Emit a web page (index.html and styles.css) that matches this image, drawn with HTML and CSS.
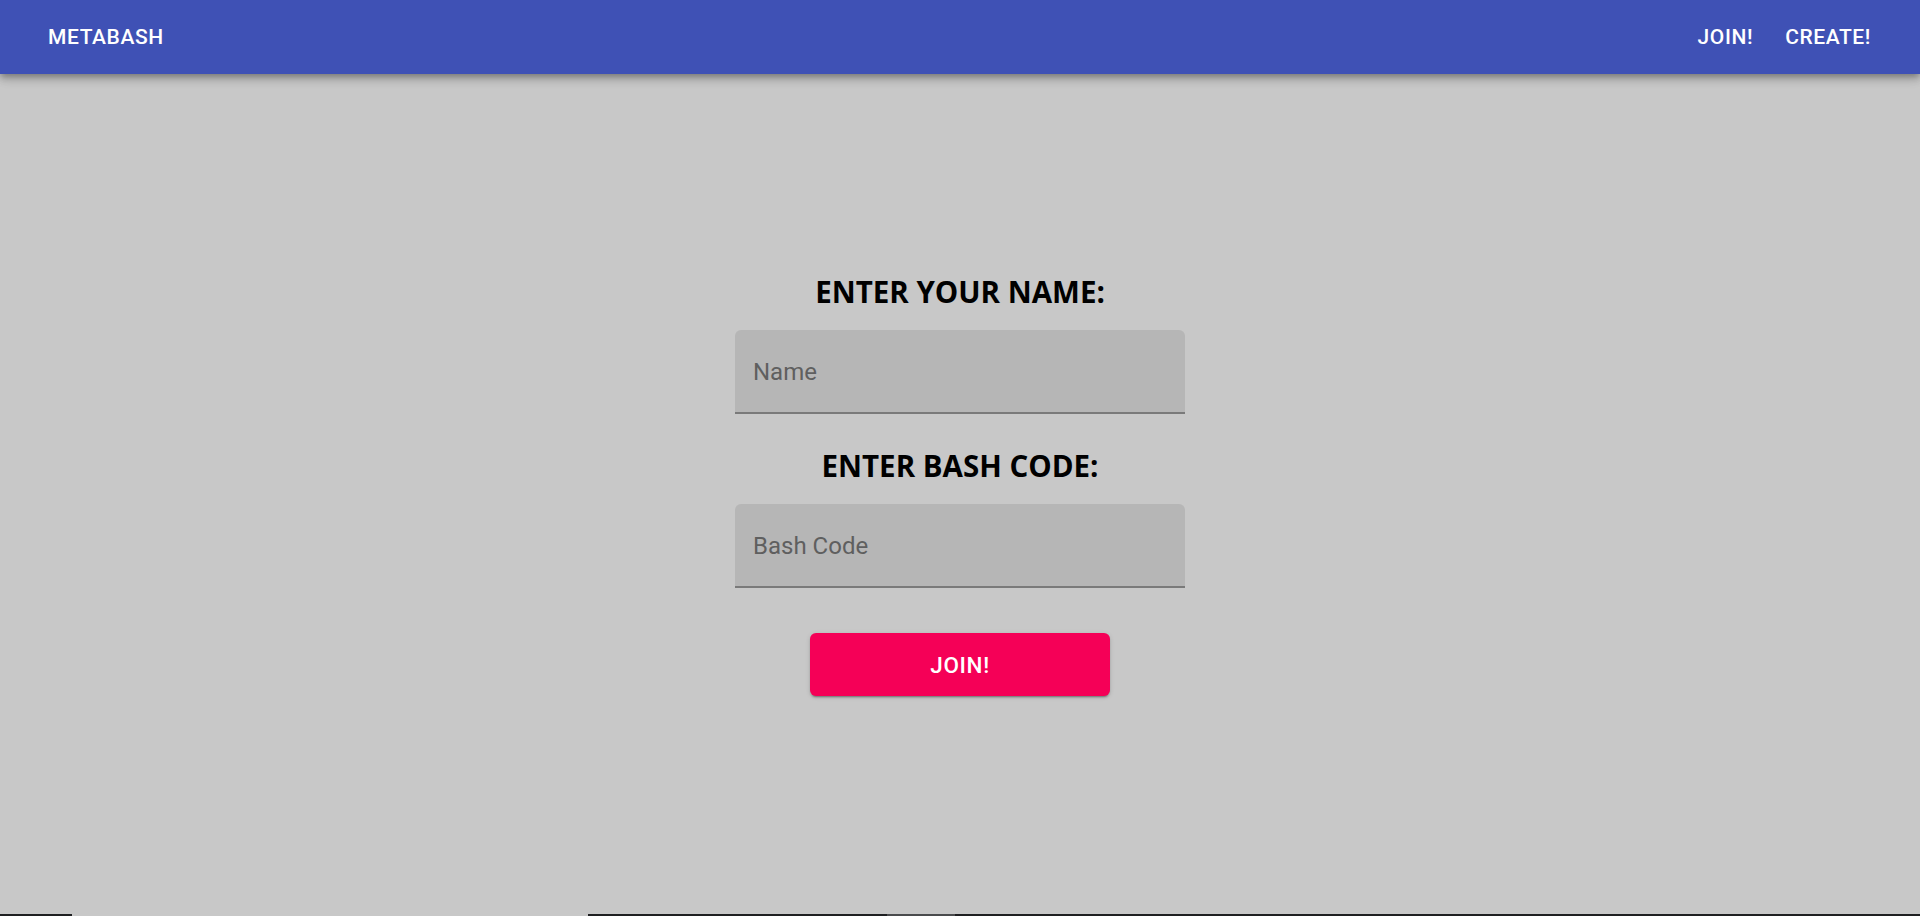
FILE: index.html
```html
<!DOCTYPE html>
<html lang="en">
<head>
<meta charset="utf-8">
<title>Metabash</title>
<link rel="stylesheet" href="styles.css">
</head>
<body>
<div class="page">
  <header class="appbar">
    <a class="nav-btn brand" href="#">METABASH</a>
    <nav class="nav">
      <a class="nav-btn" href="#">JOIN!</a>
      <a class="nav-btn" href="#">CREATE!</a>
    </nav>
  </header>
  <main class="main">
    <form class="form">
      <h2 class="label">ENTER YOUR NAME:</h2>
      <div class="field"><input class="input" type="text" placeholder="Name"></div>
      <h2 class="label label-second">ENTER BASH CODE:</h2>
      <div class="field"><input class="input" type="text" placeholder="Bash Code"></div>
      <button class="join" type="button">JOIN!</button>
    </form>
  </main>
  <div class="strip">
    <span class="seg dark s1"></span>
    <span class="seg clear s2"></span>
    <span class="seg dark s3"></span>
    <span class="seg gray s4"></span>
    <span class="seg dark s5"></span>
  </div>
</div>
</body>
</html>
```

FILE: styles.css
```css
* { box-sizing: border-box; }
html, body { margin: 0; padding: 0; height: 100%; }
body {
  background: #c8c8c8;
  font-family: Roboto, "Liberation Sans", sans-serif;
  overflow: hidden;
}
.page {
  height: 916px;
  display: flex;
  flex-direction: column;
}
.appbar {
  height: 74px;
  flex: 0 0 74px;
  background: #3f51b5;
  display: flex;
  align-items: center;
  justify-content: space-between;
  padding: 0 49px 0 48px;
  box-shadow: 0 3px 6px -1px rgba(0,0,0,0.25), 0 6px 8px 0 rgba(0,0,0,0.14), 0 1px 15px 0 rgba(0,0,0,0.12);
  position: relative;
  z-index: 2;
}
.nav { display: flex; gap: 32px; }
.nav-btn {
  color: #fff;
  text-decoration: none;
  font-family: Roboto, sans-serif;
  font-weight: 500;
  font-size: 21px;
  letter-spacing: 0.6px;
  line-height: 1;
  padding-top: 1px;
}
.main {
  flex: 1;
  display: flex;
  justify-content: center;
}
.form {
  display: flex;
  flex-direction: column;
  align-items: center;
  padding-top: 201px;
  width: 450px;
}
.label {
  margin: 0 0 21px;
  font-family: "Open Sans", sans-serif;
  font-weight: 700;
  font-size: 29.5px;
  line-height: 34px;
  color: #000;
  text-align: center;
  white-space: nowrap;
}
.label-second { margin-top: 35px; }
.field {
  width: 450px;
  height: 84px;
  background: #b6b6b6;
  border-radius: 6px 6px 0 0;
  border-bottom: 2px solid #7a7a7a;
  display: flex;
  align-items: center;
  padding: 0 18px 0 18px;
}
.input {
  width: 100%;
  border: 0;
  outline: 0;
  background: transparent;
  font-family: Roboto, sans-serif;
  font-size: 24px;
  color: #222;
  padding: 0;
  margin: 2px 0 0;
}
.input::placeholder { color: #5f5f5f; opacity: 1; }
.join {
  margin-top: 45px;
  width: 300px;
  height: 63px;
  border: 0;
  border-radius: 6px;
  background: #f50057;
  color: #fff;
  font-family: Roboto, sans-serif;
  font-weight: 500;
  font-size: 22.5px;
  letter-spacing: 0.64px;
  box-shadow: 0 3px 1px -2px rgba(0,0,0,0.2), 0 2px 2px 0 rgba(0,0,0,0.14), 0 1px 5px 0 rgba(0,0,0,0.12);
  cursor: pointer;
}
.strip {
  flex: 0 0 2px;
  display: flex;
}
.seg { display: block; height: 2px; }
.dark { background: #1e1f21; }
.gray { background: #4a4b4d; }
.clear { background: transparent; }
.s1 { width: 72px; }
.s2 { width: 516px; }
.s3 { width: 299px; }
.s4 { width: 68px; }
.s5 { flex: 1; }
```
